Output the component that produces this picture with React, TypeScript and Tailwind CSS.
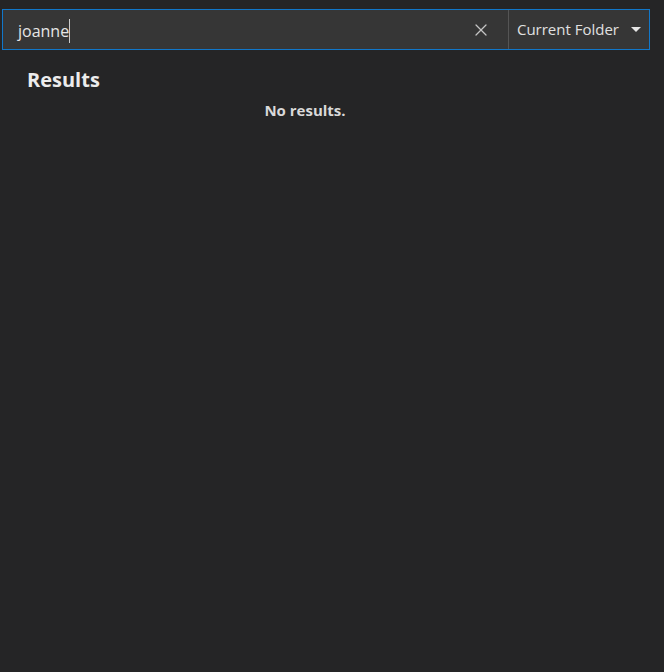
import { X } from "lucide-react";

const App = () => {
  return (
    <div
      className="w-[664px] h-[672px] bg-[#252526] text-[#cccccc] overflow-hidden"
      style={{ fontFamily: '"Open Sans", "Noto Sans", sans-serif' }}
    >
      <div className="pt-[9px] pl-[2px] pr-[14px]">
        <div className="flex h-[41px] border border-[#1177c9] bg-[#363636]">
          <div className="flex-1 flex items-center pl-[15px] pt-[3px]">
            <span className="text-[16px] text-[#e6e6e6] leading-none">joanne</span>
            <span className="w-px h-[24px] bg-[#cccccc]" />
          </div>
          <div className="w-[40px] flex items-center justify-center pr-[14px]">
            <X size={20} strokeWidth={1.5} className="text-[#c5c5c5]" />
          </div>
          <div className="w-px bg-[#555555]" />
          <div className="flex items-center pl-[8px] pr-[8px] gap-[12px]">
            <span className="text-[15px] text-[#e0e0e0]">Current Folder</span>
            <svg width="10" height="6" viewBox="0 0 10 6">
              <path d="M0 0 L10 0 L5 5 Z" fill="#e6e6e6" />
            </svg>
          </div>
        </div>
      </div>
      <div className="pl-[27px] pt-[17px]">
        <h2 className="text-[20px] font-bold text-[#ececec] leading-[26px]">Results</h2>
      </div>
      <div className="w-[610px] text-center pt-[6px]">
        <p className="text-[15px] font-bold text-[#d9d9d9]">No results.</p>
      </div>
    </div>
  );
};

export default App;
